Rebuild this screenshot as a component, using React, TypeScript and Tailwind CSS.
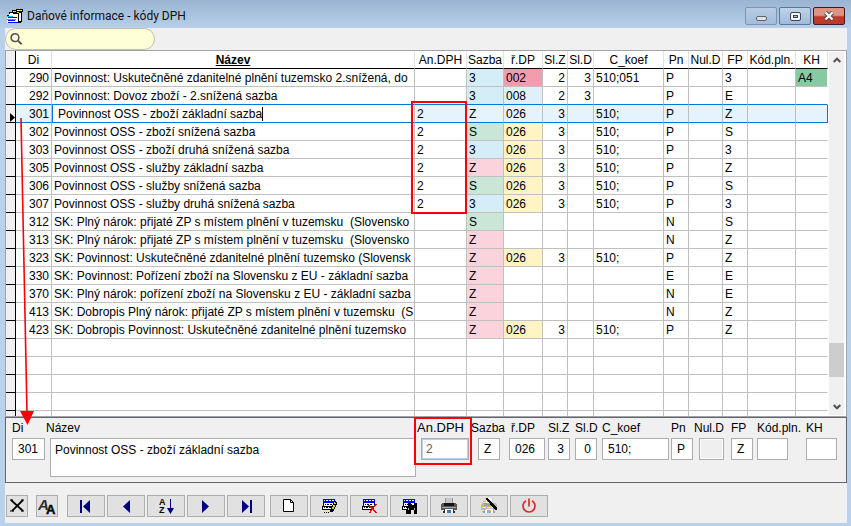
import type { ReactNode } from "react";

type Row = {
  di: string;
  name: string;
  an?: string;
  rate?: string;
  line?: string;
  slZ?: string;
  slD?: string;
  koef?: string;
  pn: string;
  fp: string;
  kh?: string;
  active?: boolean;
};

const rows: Row[] = [
  { di: "290", name: "Povinnost: Uskutečněné zdanitelné plnění tuzemsko 2.snížená, do", rate: "3", line: "002", slZ: "2", slD: "3", koef: "510;051", pn: "P", fp: "3", kh: "A4" },
  { di: "292", name: "Povinnost: Dovoz zboží - 2.snížená sazba", rate: "3", line: "008", slZ: "2", slD: "3", pn: "P", fp: "E" },
  { di: "301", name: "Povinnost OSS - zboží základní sazba", an: "2", rate: "Z", line: "026", slZ: "3", koef: "510;", pn: "P", fp: "Z", active: true },
  { di: "302", name: "Povinnost OSS - zboží snížená sazba", an: "2", rate: "S", line: "026", slZ: "3", koef: "510;", pn: "P", fp: "S" },
  { di: "303", name: "Povinnost OSS - zboží druhá snížená sazba", an: "2", rate: "3", line: "026", slZ: "3", koef: "510;", pn: "P", fp: "3" },
  { di: "305", name: "Povinnost OSS - služby základní sazba", an: "2", rate: "Z", line: "026", slZ: "3", koef: "510;", pn: "P", fp: "Z" },
  { di: "306", name: "Povinnost OSS - služby snížená sazba", an: "2", rate: "S", line: "026", slZ: "3", koef: "510;", pn: "P", fp: "S" },
  { di: "307", name: "Povinnost OSS - služby druhá snížená sazba", an: "2", rate: "3", line: "026", slZ: "3", koef: "510;", pn: "P", fp: "3" },
  { di: "312", name: "SK: Plný nárok: přijaté ZP s místem plnění v tuzemsku  (Slovensko", rate: "S", pn: "N", fp: "S" },
  { di: "313", name: "SK: Plný nárok: přijaté ZP s místem plnění v tuzemsku  (Slovensko", rate: "Z", pn: "N", fp: "Z" },
  { di: "323", name: "SK: Povinnost: Uskutečněné zdanitelné plnění tuzemsko (Slovensk", rate: "Z", line: "026", slZ: "3", koef: "510;", pn: "P", fp: "Z" },
  { di: "330", name: "SK: Povinnost: Pořízení zboží na Slovensku z EU - základní sazba", rate: "Z", pn: "E", fp: "E" },
  { di: "370", name: "SK: Plný nárok: pořízení zboží na Slovensku z EU - základní sazba", rate: "Z", pn: "N", fp: "E" },
  { di: "413", name: "SK: Dobropis Plný nárok: přijaté ZP s místem plnění v tuzemsku  (S", rate: "Z", pn: "N", fp: "Z" },
  { di: "423", name: "SK: Dobropis Povinnost: Uskutečněné zdanitelné plnění tuzemsko", rate: "Z", line: "026", slZ: "3", koef: "510;", pn: "P", fp: "Z" },
];

const rateColor: Record<string, string> = {
  "3": "bg-[#d5edf7]",
  S: "bg-[#c9e6d6]",
  Z: "bg-[#fad3dc]",
};

const lineColor: Record<string, string> = {
  "002": "bg-[#f19caf]",
  "008": "bg-[#dff0f9]",
  "026": "bg-[#fff5c4]",
};

const emptyRows = [0, 1, 2, 3, 4];

const cell = "h-[18px] overflow-hidden whitespace-pre border-r border-b p-0 leading-4";

function TitleIcon() {
  return (
    <svg width="16" height="16" viewBox="0 0 16 16" shapeRendering="crispEdges" aria-hidden="true">
      <path d="M5 2h4V1h7v3h-1v10h-1v1H1V8H0V7h2V4h3z" fill="#000" />
      <path d="M6 3h3v1H6zM10 2h5v1h-5zM3 5h3v1H3z" fill="#fff" />
      <path d="M7 3h2v1H7zM12 2h2v1h-2zM10 4h2v1h-2z" fill="#ffe800" />
      <path d="M2 6h9v2H2zM12 5h2v8h-2z" fill="#fff" />
      <path d="M0 8h11v7H0z" fill="#fff" />
      <path d="M0 8h6v1H0zM0 11h9v1H0z" fill="#00b8ff" />
      <path d="M1 9h9v1H1zM1 12h7v1H1zM1 14h10v1H1z" fill="#0000ff" />
    </svg>
  );
}

function Svg16({ children, smooth }: { children: ReactNode; smooth?: boolean }) {
  return (
    <svg width="16" height="16" viewBox="0 0 16 16" shapeRendering={smooth ? "auto" : "crispEdges"} aria-hidden="true">
      {children}
    </svg>
  );
}

/* Small record sheet shared by the edit, delete and find buttons. */
function Sheet() {
  return (
    <>
      <path d="M2 1h12v4H2z" fill="#0000ff" />
      <path d="M3 2h1v1H3zM5 2h2v1H5zM8 2h2v1H8zM11 2h2v1h-2z" fill="#fff" />
      <path d="M2 5h12v4H2zM1 8h12v4H1z" fill="#000" />
      <path d="M3 5h10v3H3zM2 9h10v2H2z" fill="#fff" />
      <path d="M4 6h1v1H4zM6 6h2v1H6zM9 6h2v1H9zM3 10h1V9H3zM5 9h2v1H5zM8 9h2v1H8z" fill="#000" />
    </>
  );
}

function PrinterBody({ light }: { light?: boolean }) {
  return (
    <>
      <path d="M4 0h8v6H4z" fill={light ? "#d2d2d2" : "#9a9a9a"} />
      <path d="M5 0h6v5H5z" fill={light ? "#f4f4f4" : "#c4c8cc"} />
      <path d="M1 5h14l1 2v5H0V7z" fill={light ? "#b9b9b9" : "#585858"} />
      <path d="M3 5h10v3H3z" fill={light ? "#9c9c9c" : "#161616"} />
      <path d="M1 9h14v1H1z" fill={light ? "#e6e6e6" : "#a8a8a8"} />
      <path d="M3 11h10l1 4H2z" fill={light ? "#a0a0a0" : "#303030"} />
      <path d="M4 11h8v4H4z" fill="#fff" />
      <path d="M6 12h4v3H6z" fill={light ? "#7fb2dc" : "#2f7fc4"} />
    </>
  );
}

function ToolButton({ label, narrow, className = "", children }: { label: string; narrow?: boolean; className?: string; children: ReactNode }) {
  return (
    <button
      type="button"
      aria-label={label}
      className={`flex h-[22px] shrink-0 items-center justify-center border border-[#adadad] bg-[#e1e1e1] ${narrow ? "w-[22px]" : "w-[38px]"} ${className}`}
    >
      {children}
    </button>
  );
}

function Field({
  id,
  label,
  value = "",
  group,
  box,
  labelClass = "text-xs",
  inputClass = "border-[#abadb3] bg-white px-[5px]",
  children,
}: {
  id: string;
  label: string;
  value?: string;
  group: string;
  box: string;
  labelClass?: string;
  inputClass?: string;
  children?: ReactNode;
}) {
  return (
    <div className={`relative flex shrink-0 flex-col ${group}`}>
      <label htmlFor={id} className={`h-5 whitespace-nowrap leading-5 ${labelClass}`}>
        {label}
      </label>
      <input id={id} type="text" defaultValue={value} className={`h-[22px] border text-xs outline-none ${box} ${inputClass}`} />
      {children}
    </div>
  );
}

function TitleBar() {
  const frame = "flex h-[18px] w-8 items-center justify-center rounded-xs border";
  return (
    <header className="flex h-7 shrink-0 items-center justify-between bg-linear-to-b from-[#9ab4d3] to-[#b7cfe9] pr-1.5 pl-[7px]">
      <div className="flex items-center gap-1 pt-1">
        <TitleIcon />
        <h1 className="font-['Roboto','Open_Sans',sans-serif] text-xs leading-4 text-[#101010]">Daňové informace - kódy DPH</h1>
      </div>
      <div className="flex gap-0.5 pt-1">
        <button type="button" aria-label="Minimalizovat" className={`${frame} border-[#7c93b2] bg-linear-to-b from-[#b9cce4] to-[#a3bddb]`}>
          <span className="mt-1 h-[5px] w-[11px] rounded-xs border border-[#5d6470] bg-[#e2e2e2]" />
        </button>
        <button type="button" aria-label="Maximalizovat" className={`${frame} border-[#5c7796] bg-linear-to-b from-[#c0d3ea] to-[#9fbbdc]`}>
          <span className="flex h-[9px] w-[11px] items-center justify-center rounded-xs border border-[#40464f] bg-[#f4f4f4]">
            <span className="h-[3px] w-[5px] border border-[#40464f] bg-[#9fbbdc]" />
          </span>
        </button>
        <button type="button" aria-label="Zavřít" className={`${frame} border-[#471625] bg-linear-to-b from-[#dd9484] from-45% to-[#bc3b28] to-55%`}>
          <svg width="12" height="10" viewBox="0 0 12 10" aria-hidden="true">
            <path d="M2.500 1.500L9.500 8.500M9.500 1.500L2.500 8.500" stroke="#4b4550" strokeWidth="4.200" />
            <path d="M2.500 1.500L9.500 8.500M9.500 1.500L2.500 8.500" stroke="#f7f7f7" strokeWidth="2.400" />
          </svg>
        </button>
      </div>
    </header>
  );
}

function GridRow({ row, beforeActive }: { row: Row; beforeActive: boolean }) {
  const edge = row.active || beforeActive ? "border-b-[#0078d7]" : "border-b-[#c0c0c0]";
  const c = `${cell} border-r-[#c0c0c0] ${edge}`;
  const tint = row.active ? "bg-[#e5f3ff]" : "";
  return (
    <tr className={tint}>
      <td className={`${cell} border-black bg-[#f0f0f0]`}>
        {row.active && (
          <div className="flex h-4 items-end justify-end">
            <svg width="5" height="9" viewBox="0 0 5 9" aria-hidden="true">
              <path d="M0 0v9l5-4.500z" fill="#000" />
            </svg>
          </div>
        )}
      </td>
      <td className={`${c} pr-0.5 text-right`}>{row.di}</td>
      {row.active ? (
        <td className={`${c} border-l border-l-[#0078d7] bg-white`}>
          <div className="flex h-4 items-center pl-[5px]">
            <input aria-label="Název" type="text" defaultValue={row.name} className="field-sizing-content leading-4 outline-none" />
            <span className="h-[14px] w-px bg-black" />
          </div>
        </td>
      ) : (
        <td className={`${c} pl-0.5`}>{row.name}</td>
      )}
      <td className={`h-[18px] border-r border-b border-r-[#c0c0c0] p-0 pl-0.5 leading-4 ${edge} ${row.active ? "relative" : ""}`}>
        {row.an}
        {row.active && <span className="pointer-events-none absolute -top-1 -left-1 z-10 h-[113px] w-14 border-2 border-[#fb0007]" />}
      </td>
      <td className={`${c} pl-0.5 ${row.active ? "" : rateColor[row.rate ?? ""]}`}>{row.rate}</td>
      <td className={`${c} pl-0.5 ${row.active || !row.line ? "" : lineColor[row.line]}`}>{row.line}</td>
      <td className={`${c} pr-0.5 text-right`}>{row.slZ}</td>
      <td className={`${c} pr-0.5 text-right`}>{row.slD}</td>
      <td className={`${c} pl-0.5`}>{row.koef}</td>
      <td className={`${c} pl-0.5`}>{row.pn}</td>
      <td className={c} />
      <td className={`${c} pl-0.5`}>{row.fp}</td>
      <td className={c} />
      <td className={`${cell} pl-0.5 ${edge} ${row.active ? "border-r-[#0078d7]" : "border-r-white"} ${row.kh ? "bg-[#87c9a0]" : ""}`}>{row.kh}</td>
    </tr>
  );
}

function Grid() {
  const th = "h-[18px] overflow-hidden whitespace-nowrap border-r border-b border-r-[#e2e2e2] border-b-black p-0 text-center font-normal leading-4";
  return (
    <section className="relative flex min-h-0 flex-1 border border-[#a0a3a8] bg-white">
      <div className="min-w-0 flex-1 overflow-hidden">
        <table className="w-full table-fixed border-separate border-spacing-0 text-xs">
          <colgroup>
            <col className="w-[10px]" />
            <col className="w-[36px]" />
            <col />
            <col className="w-[52px]" />
            <col className="w-[37px]" />
            <col className="w-[39px]" />
            <col className="w-[25px]" />
            <col className="w-[26px]" />
            <col className="w-[70px]" />
            <col className="w-[25px]" />
            <col className="w-[34px]" />
            <col className="w-[25px]" />
            <col className="w-[48px]" />
            <col className="w-[32px]" />
          </colgroup>
          <thead>
            <tr>
              <td className={`${cell} border-black bg-[#f0f0f0]`} />
              <th className={th}>Di</th>
              <th className={th}>
                <span className="font-bold underline">Název</span>
              </th>
              <th className={th}>An.DPH</th>
              <th className={th}>Sazba</th>
              <th className={th}>ř.DP</th>
              <th className={th}>Sl.Z</th>
              <th className={th}>Sl.D</th>
              <th className={th}>C_koef</th>
              <th className={th}>Pn</th>
              <th className={th}>Nul.D</th>
              <th className={th}>FP</th>
              <th className={th}>Kód.pln.</th>
              <th className={th}>KH</th>
            </tr>
          </thead>
          <tbody>
            {rows.map((row, i) => (
              <GridRow key={row.di} row={row} beforeActive={Boolean(rows[i + 1]?.active)} />
            ))}
            {emptyRows.map((n) => (
              <tr key={n}>
                <td className={`${cell} border-black bg-[#f0f0f0]`} />
                {Array.from({ length: 12 }, (_, k) => (
                  <td key={k} className={`${cell} border-[#c0c0c0]`} />
                ))}
                <td className={`${cell} border-r-white border-b-[#c0c0c0]`} />
              </tr>
            ))}
          </tbody>
        </table>
      </div>
      <div className="my-px mr-0.5 ml-px flex w-[15px] shrink-0 flex-col bg-[#f0f0f0]">
        <button type="button" aria-label="Nahoru" className="flex h-4 items-center justify-center">
          <svg width="8" height="6" viewBox="0 0 8 6" fill="none" aria-hidden="true">
            <path d="M.7 5L4 1.700 7.300 5" stroke="#505050" strokeWidth="2" />
          </svg>
        </button>
        <div className="flex-1" />
        <div className="h-[34px] bg-[#cdcdcd]" />
        <div className="h-[22px]" />
        <button type="button" aria-label="Dolů" className="flex h-4 items-center justify-center">
          <svg width="8" height="6" viewBox="0 0 8 6" fill="none" aria-hidden="true">
            <path d="M.7 1L4 4.300 7.300 1" stroke="#505050" strokeWidth="2" />
          </svg>
        </button>
      </div>
      {/* Arrow linking the active row to the detail form below the grid. */}
      <svg className="pointer-events-none absolute top-[66px] left-[14px] z-10" width="16" height="308" viewBox="0 0 16 308" aria-hidden="true">
        <path d="M1 1L7 296" stroke="#fb0007" strokeWidth="1.600" />
        <path d="M0 294h14L7.500 308z" fill="#fb0007" />
      </svg>
    </section>
  );
}

function Detail() {
  return (
    <section className="flex h-[66px] shrink-0 items-start border border-[#646568] pl-1.5 text-xs">
      <Field id="di" label="Di" value="301" group="w-[34px]" box="w-[33px]" />
      <div className="flex min-w-0 flex-1 flex-col">
        <label htmlFor="nazev" className="h-5 leading-5">
          Název
        </label>
        <textarea
          id="nazev"
          defaultValue="Povinnost OSS - zboží základní sazba"
          className="mr-px ml-1 h-[39px] resize-none border border-[#abadb3] bg-white px-1 py-[3px] leading-4 outline-none"
        />
      </div>
      <Field
        id="andph"
        label="An.DPH"
        value="2"
        group="w-[54px]"
        box="ml-1 w-12"
        labelClass="text-[13px]"
        inputClass="border-[#abadb3] bg-white px-1 text-[#606060] inset-ring-1 inset-ring-[#b4d0ea]"
      >
        <span className="pointer-events-none absolute -top-px -left-[3px] z-10 h-12 w-[58px] border-2 border-[#fb0007]" />
      </Field>
      <Field id="sazba" label="Sazba" value="Z" group="w-[38px]" box="ml-[7px] w-[22px]" />
      <Field id="rdp" label="ř.DP" value="026" group="w-[39px]" box="w-9" labelClass="pl-0.5 text-xs" />
      <Field id="slz" label="Sl.Z" value="3" group="w-[27px]" box="w-[22px] text-right" />
      <Field id="sld" label="Sl.D" value="0" group="w-[27px]" box="w-[22px] text-right" />
      <Field id="koef" label="C_koef" value="510;" group="w-[69px]" box="w-[67px]" />
      <Field id="pn" label="Pn" value="P" group="w-[23px]" box="w-[22px]" />
      <Field
        id="nuld"
        label="Nul.D"
        group="w-[37px]"
        box="ml-[5px] w-[25px]"
        inputClass="border-[#abadb3] bg-[#efefef] inset-ring-1 inset-ring-white"
      />
      <Field id="fp" label="FP" value="Z" group="w-[26px]" box="w-[22px]" />
      <Field id="kod" label="Kód.pln." group="w-[49px]" box="w-[31px]" />
      <Field id="kh" label="KH" group="w-[40px]" box="w-[31px]" />
    </section>
  );
}

function Toolbar() {
  return (
    <nav className="flex shrink-0 gap-0.5 pt-3 pb-1.5 pl-px">
      <ToolButton label="Zavřít formulář" narrow className="mr-[6px]">
        <Svg16 smooth>
          <path d="M2 2l12 11M14 2L3 13" stroke="#000" strokeWidth="1.800" fill="none" />
          <path d="M1 2h3M12 2h3M1 13h4M12 13h3" stroke="#000" />
        </Svg16>
      </ToolButton>
      <ToolButton label="Písmo" narrow className="mr-[7px]">
        <svg width="18" height="18" viewBox="0 0 18 18" aria-hidden="true">
          <text x="0" y="13" fontFamily="Liberation Sans, sans-serif" fontSize="15" fontWeight="700" fontStyle="italic" fill="#303030">
            A
          </text>
          <text x="8" y="17" fontFamily="Liberation Sans, sans-serif" fontSize="13" fontWeight="700" fill="#000" stroke="#000" strokeWidth=".4">
            A
          </text>
        </svg>
      </ToolButton>
      <ToolButton label="První">
        <Svg16 smooth>
          <path d="M2 2h2v13H2zM12 2v13L5 8.500z" fill="#000080" />
        </Svg16>
      </ToolButton>
      <ToolButton label="Předchozí">
        <Svg16 smooth>
          <path d="M12 2v13L5 8.500z" fill="#000080" />
        </Svg16>
      </ToolButton>
      <ToolButton label="Seřadit">
        <Svg16 smooth>
          <text x="1" y="7" fontFamily="Liberation Sans, sans-serif" fontSize="9" fontWeight="700" fill="#000">
            A
          </text>
          <text x="1" y="15" fontFamily="Liberation Sans, sans-serif" fontSize="9" fontWeight="700" fill="#000">
            Z
          </text>
          <path d="M12 1h1v9h3l-3.500 6L9 10h3z" fill="#000080" />
        </Svg16>
      </ToolButton>
      <ToolButton label="Další">
        <Svg16 smooth>
          <path d="M4 2v13l7-6.500z" fill="#000080" />
        </Svg16>
      </ToolButton>
      <ToolButton label="Poslední" className="mr-[3px]">
        <Svg16 smooth>
          <path d="M4 2v13l7-6.500zM12 2h2v13h-2z" fill="#000080" />
        </Svg16>
      </ToolButton>
      <ToolButton label="Nový">
        <Svg16 smooth>
          <path d="M2.500 1.500h7l3 3v9h-10z" fill="#fff" stroke="#000" />
          <path d="M9.500 1.500v3h3" fill="none" stroke="#000" />
        </Svg16>
      </ToolButton>
      <ToolButton label="Opravit">
        <Svg16>
          <Sheet />
          <path d="M13 3h2v1h1v3h-1v2h-1v2h-1v2h-1v1H9v-3h1V9h1V7h1V4h1z" fill="#000" />
          <path d="M13 4h1v1h1v1h-2zM12 7h2v2h-1v2h-2V9h1z" fill="#e8dc20" />
          <path d="M3 14h1v1H3zM5 14h1v1H5zM7 14h1v1H7z" fill="#000" />
        </Svg16>
      </ToolButton>
      <ToolButton label="Smazat">
        <Svg16>
          <Sheet />
          <path d="M7 7h2v1h1v1h1v1h1v1h1v1h1v1h1v1h1v1h-2v-1h-1v-1h-1v-1h-1v-1h-1v-1H9V9H8V8H7z" fill="#f80000" />
          <path d="M14 6h2v1h-1v1h-1v1h-1v1h-1v2h-1v1h-1v2H8v-1h1v-2h1v-1h1V9h1V8h1V7h1z" fill="#f80000" />
        </Svg16>
      </ToolButton>
      <ToolButton label="Hledat v záznamech">
        <Svg16>
          <Sheet />
          <path d="M7 5h3v2h3V5h3v4l1 3v4h-4v-4h-3v4H5v-4l2-4z" fill="#000" />
          <path d="M7 10h1v2H7zM13 10h1v2h-1z" fill="#b0b0b0" />
        </Svg16>
      </ToolButton>
      <ToolButton label="Tisk">
        <Svg16>
          <PrinterBody />
        </Svg16>
      </ToolButton>
      <ToolButton label="Nastavení tisku">
        <Svg16>
          <PrinterBody light />
          <path d="M2 3h2v1H2zM4 6h1v1H4zM1 8h2v1H1zM6 2h1v2H6zM7 8h2v1H7zM3 11h2v1H3zM9 12h1v1H9zM12 10h1v1h-1zM6 5h2v1H6zM5 9h1v1H5zM1 13h1v1H1z" fill="#f2a928" />
          <path d="M5 0h2v1h1v1h1v1h1v1h1v1h1v1h1v1h1v1h1v1h1v3h-2v-1h-1v-1h-1V9h-1V8h-1V7h-1V6H9V5H8V4H7V3H6V2H5z" fill="#000" />
        </Svg16>
      </ToolButton>
      <ToolButton label="Konec">
        <Svg16 smooth>
          <path d="M5 2.800a6 6 0 1 0 6 0M8 .5v8" stroke="#dc2832" strokeWidth="1.700" fill="none" />
        </Svg16>
      </ToolButton>
    </nav>
  );
}

export default function App() {
  return (
    <div className="flex h-screen min-w-0 flex-col overflow-hidden bg-[#b9d1ea] font-['Liberation_Sans',Arial,sans-serif] text-black">
      <TitleBar />
      <main className="mr-1 mb-[3px] ml-[5px] flex min-h-0 flex-1 flex-col bg-[#f0f0f0]">
        <div className="flex h-[22px] shrink-0">
          <label className="flex h-[22px] w-[150px] items-center rounded-full border border-[#c0c0b4] bg-[#ffffd7] pl-1">
            <svg width="14" height="14" viewBox="0 0 14 14" fill="none" aria-hidden="true">
              <circle cx="5.500" cy="5.500" r="4.300" stroke="#505050" strokeWidth="1.700" />
              <path d="M8.800 8.800l4 4" stroke="#505050" strokeWidth="2" />
            </svg>
            <input type="search" aria-label="Hledat" className="w-full min-w-0 bg-transparent px-1 text-xs outline-none" />
          </label>
        </div>
        <Grid />
        <Detail />
        <Toolbar />
      </main>
    </div>
  );
}
